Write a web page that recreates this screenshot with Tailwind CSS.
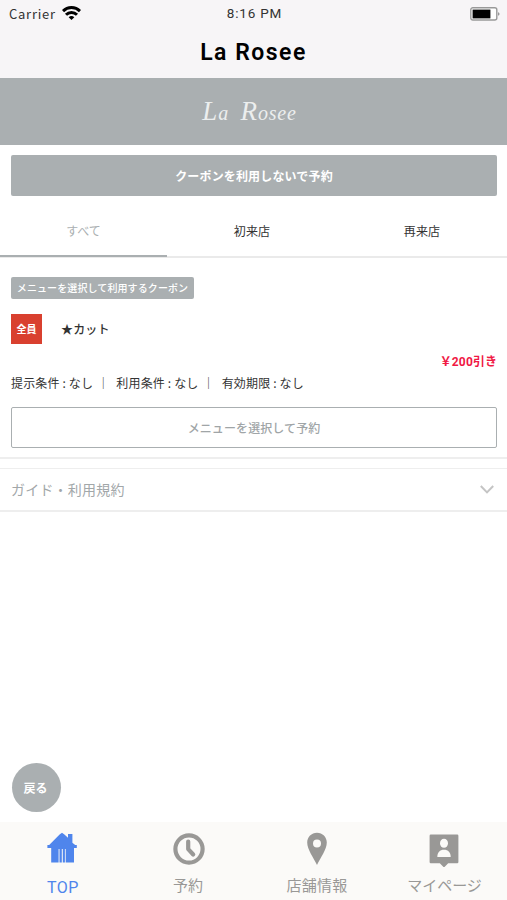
<!DOCTYPE html>
<html lang="ja">
<head>
    <meta charset="UTF-8">
    <meta name="viewport" content="width=device-width, initial-scale=1.0">
    <script src="https://cdn.jsdelivr.net/npm/@tailwindcss/browser@4"></script>
    <title>La Rosee</title>
</head>
<body class="flex h-[900px] flex-col bg-white font-['Noto_Sans_CJK_JP',sans-serif] text-xs leading-none text-[#333] overflow-hidden">
    <header class="h-[78px] shrink-0 bg-[#f7f5f7]">
        <div class="grid h-7 grid-cols-3 items-center pl-[9px] pr-[7px] text-[13px]">
            <div class="flex items-center gap-[6px]">
                <span class="-mt-px tracking-[0.75px]">Carrier</span>
                <svg class="-mt-[3px] h-[14px] w-[19px]" viewBox="0 0 19 14" fill="none" stroke="#000" stroke-width="3">
                    <path d="M1 5.1C5.7.4 13.3.4 18 5.1"/>
                    <path d="M4 8.8c3-3 8-3 11 0"/>
                    <path d="M6.7 11.2c1.5-1.5 4.100-1.500 5.600 0L9.500 14z" fill="#000" stroke="none"/>
                </svg>
            </div>
            <span class="text-center font-['Roboto',sans-serif] text-[13.5px] tracking-[0.8px]">8:16 PM</span>
            <svg class="h-[14px] w-[30px] justify-self-end" viewBox="0 0 30 14">
                <rect x=".8" y=".8" width="26" height="12.2" rx="2" fill="#fff" stroke="#999" stroke-width="1.4"/>
                <rect x="2.6" y="2.6" width="17.8" height="8.8" fill="#000"/>
                <path d="M28 5.2c2 .4 2 3 0 3.4z" fill="#999"/>
            </svg>
        </div>
        <h1 class="pt-[13px] text-center font-['Roboto',sans-serif] text-[23px] font-semibold tracking-[1.5px] text-black">La Rosee</h1>
    </header>

    <div class="flex h-[67px] shrink-0 items-center justify-center bg-[#aaafb1]">
        <span class="-ml-2 font-['Liberation_Serif',serif] text-[20px] italic tracking-[0.8px] text-[#eceeee]"><span class="text-[27px]">L</span>a&nbsp; <span class="text-[27px]">R</span>osee</span>
    </div>

    <main class="grow">
        <div class="px-[11px] pt-[10px] pr-[10px]">
            <button class="block h-[41px] w-full rounded-xs bg-[#aaafb1] font-bold tracking-[0.15px] text-white">クーポンを利用しないで予約</button>
        </div>

        <nav class="mt-[10px] flex h-[52px] border-b-2 border-[#eaeaea] text-center leading-[50px]">
            <a class="-mb-px w-[167px] border-b-2 border-[#aaafb1] text-[#aaafb1]">すべて</a>
            <a class="w-[170px] tracking-[0.2px]">初来店</a>
            <a class="w-[170px] tracking-[0.2px]">再来店</a>
        </nav>

        <section class="border-b-2 border-[#eee] pt-[19px] pr-[10px] pb-[9px] pl-[11px]">
            <span class="flex h-[22px] w-[183px] items-center justify-center rounded-xs bg-[#aaafb1] text-[10px] font-medium tracking-[0.1px] text-white">メニューを選択して利用するクーポン</span>
            <div class="mt-[15px] flex items-center">
                <span class="flex h-[30px] w-[31px] items-center justify-center bg-[#d9402f] text-[10px] font-bold text-white">全員</span>
                <span class="ml-[19px] font-medium tracking-[0.15px]">★カット</span>
            </div>
            <p class="mt-[11px] h-3 text-right font-bold text-[#f01844]">￥<span class="font-['Roboto',sans-serif] tracking-[0.2px]">200</span>引き</p>
            <p class="mt-[10px] flex tracking-[0.16px]">
                <span>提示条件 : なし</span>
                <span class="ml-1">｜</span>
                <span class="ml-[7px]">利用条件 : なし</span>
                <span class="ml-1">｜</span>
                <span class="ml-[7px]">有効期限 : なし</span>
            </p>
            <button class="mt-[18px] block h-[41px] w-full rounded-xs border border-[#aaafb1] font-medium tracking-[0.1px] text-[#a0a5a7]">メニューを選択して予約</button>
        </section>

        <section class="mt-[9px] flex h-[44px] items-center justify-between border-t border-b-2 border-[#eee] pr-[13px] pb-px pl-[11px] text-sm tracking-[0.2px] text-[#a2a7a9]">
            <span>ガイド・利用規約</span>
            <svg class="h-[9px] w-[14px]" viewBox="0 0 14 9" fill="none" stroke="#c4c4c4" stroke-width="2">
                <path d="M.8 1 7 7.4 13.2 1"/>
            </svg>
        </section>
    </main>

    <button class="mb-[10px] ml-3 h-[49px] w-[49px] shrink-0 rounded-full bg-[#aaafb1] pr-[2px] font-bold text-white">戻る</button>

    <footer class="flex h-[78px] shrink-0 bg-[#fbfaf8] text-[15px] text-[#999896]">
        <a class="flex w-[125px] flex-col items-center pt-[9px] text-[#4f85ec]">
            <svg class="-ml-[2px] h-9 w-9" viewBox="0 0 36 36" fill="#4f85ec">
                <path d="M18 1.800 20.400 3.400l3.600 3.400V3h4.400v8.700l2.800 2.400h1.600v2.800h-2.800v14.500H21.700V18h-.8v13.400h-2.100V18h-1v13.400h-2.300V18h-.9v13.400H7.200V16.900H3.400v-2.800h1.800L15.600 3.400z"/>
            </svg>
            <span class="mt-[9px] ml-px font-['Roboto',sans-serif] text-base tracking-[0.5px]">TOP</span>
        </a>
        <a class="flex w-[127px] flex-col items-center pt-[9px]">
            <svg class="h-9 w-9" viewBox="0 0 36 36" fill="none" stroke="#999896" stroke-width="4.2">
                <circle cx="18" cy="18" r="13.6"/>
                <path d="M17.200 10.500v7.600l5 5.400" stroke-linecap="round" stroke-linejoin="round"/>
            </svg>
            <span class="mt-[10px] -ml-px">予約</span>
        </a>
        <a class="flex w-[130px] flex-col items-center pt-[9px]">
            <svg class="-ml-px h-9 w-9" viewBox="0 0 36 36" fill="#999896">
                <path fill-rule="evenodd" d="M18 1.800c5.500 0 9.800 4.300 9.800 9.700 0 7.100-6.400 15.300-9.800 22.500-3.400-7.200-9.800-15.400-9.800-22.500 0-5.400 4.300-9.700 9.800-9.700zm0 6.700a4 4 0 1 0 0 8 4 4 0 0 0 0-8z"/>
            </svg>
            <span class="mt-[10px] tracking-[0.3px]">店舗情報</span>
        </a>
        <a class="flex w-[125px] flex-col items-center pt-[9px]">
            <svg class="-ml-[2px] h-9 w-9" viewBox="0 0 36 36" fill="#999896">
                <path d="M4.800 3.500h26.400q1.200 0 1.200 1.200v26.400q0 1.200-1.200 1.200h-9L18 36.500l-4.200-4.200h-9q-1.200 0-1.200-1.200V4.700q0-1.200 1.200-1.200z"/>
                <ellipse cx="18" cy="12.200" rx="4" ry="4.500" fill="#fbfaf8"/>
                <path d="M11.300 26c0-4.500 2.500-7.200 6.700-7.200s6.700 2.700 6.700 7.200z" fill="#fbfaf8"/>
            </svg>
            <span class="mt-[10px]">マイページ</span>
        </a>
    </footer>
</body>
</html>
